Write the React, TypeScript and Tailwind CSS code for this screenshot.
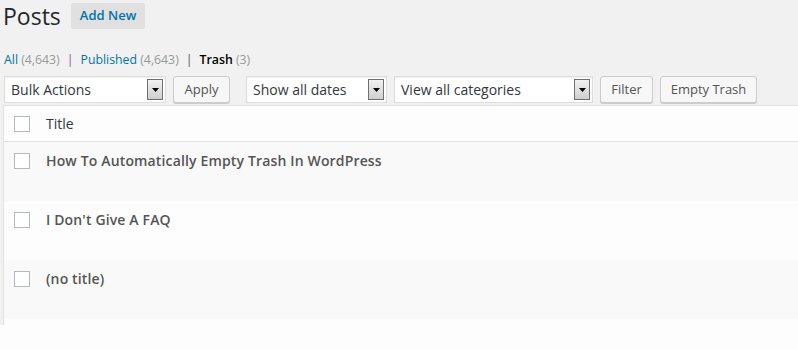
const font = { fontFamily: '"Open Sans", "Noto Sans", sans-serif' };

function SelectBox({ label, width }: { label: string; width: string }) {
  return (
    <div
      className={`flex h-[27px] ${width} items-center justify-between border border-[#dddddd] bg-white pl-[6px] pr-[2px] shadow-[inset_0_1px_2px_rgba(0,0,0,0.07)]`}
    >
      <span className="text-[14px] text-[#32373c]">{label}</span>
      <span className="flex h-[21px] w-[16px] items-center justify-center border border-[#707070] bg-gradient-to-b from-[#f2f2f2] to-[#cfcfcf]">
        <svg width="7" height="4" viewBox="0 0 7 4">
          <path d="M0 0h7L3.5 4z" fill="#000" />
        </svg>
      </span>
    </div>
  );
}

function Button({ label, width }: { label: string; width: string }) {
  return (
    <div
      className={`flex h-[27px] ${width} items-center justify-center rounded-[3px] border border-[#cccccc] bg-[#f7f7f7] text-[13px] text-[#555555] shadow-[0_1px_0_#cccccc]`}
    >
      {label}
    </div>
  );
}

function Checkbox() {
  return <div className="h-[16px] w-[16px] border border-[#b4b9be] bg-white" />;
}

export default function App() {
  const posts = [
    "How To Automatically Empty Trash In WordPress",
    "I Don't Give A FAQ",
    "(no title)",
  ];

  return (
    <div className="h-[350px] w-[798px] overflow-hidden bg-[#f1f1f1]" style={font}>
      <div className="flex items-center gap-[10px] pl-[3px] pt-[3px]">
        <h1 className="text-[23px] leading-[26px] text-[#23282d]">Posts</h1>
        <div className="flex h-[26px] items-center rounded-[2px] bg-[#e0e0e0] px-[9px] text-[13px] font-semibold text-[#0073aa]">
          Add New
        </div>
      </div>

      <div className="mt-[22px] flex items-center pl-[4px] text-[12.3px] leading-[18px]">
        <span className="text-[#0073aa]">
          All <span className="text-[#999999]">(4,643)</span>
        </span>
        <span className="px-[7px] text-[#8a5a8a]">|</span>
        <span className="text-[#0073aa]">
          Published <span className="text-[#999999]">(4,643)</span>
        </span>
        <span className="px-[7px] text-[#555555]">|</span>
        <span className="font-semibold text-black">
          Trash <span className="font-normal text-[#999999]">(3)</span>
        </span>
      </div>

      <div className="mt-[7px] flex items-center pl-[4px]">
        <SelectBox label="Bulk Actions" width="w-[162px]" />
        <div className="ml-[7px]">
          <Button label="Apply" width="w-[57px]" />
        </div>
        <div className="ml-[16px]">
          <SelectBox label="Show all dates" width="w-[141px]" />
        </div>
        <div className="ml-[7px]">
          <SelectBox label="View all categories" width="w-[199px]" />
        </div>
        <div className="ml-[7px]">
          <Button label="Filter" width="w-[53px]" />
        </div>
        <div className="ml-[7px]">
          <Button label="Empty Trash" width="w-[97px]" />
        </div>
      </div>

      <div className="ml-[3px] mt-[2px] border-l border-t border-[#e1e1e1] bg-[#fdfdfd] pb-[6px]">
        <div className="flex h-[36px] items-center border-b border-[#e1e1e1] bg-[#fdfdfd]">
          <div className="ml-[10px]">
            <Checkbox />
          </div>
          <span className="ml-[16px] text-[14px] text-[#32373c]">Title</span>
        </div>
        {posts.map((title, index) => (
          <div
            key={title}
            className={`flex h-[59px] items-start pt-[10px] ${index % 2 === 0 ? "bg-[#f9f9f9]" : "bg-[#fdfdfd]"}`}
          >
            <div className="ml-[10px] mt-[1px]">
              <Checkbox />
            </div>
            <span className="ml-[16px] text-[14px] font-semibold leading-[18px] tracking-[0.15px] text-[#555555]">
              {title}
            </span>
          </div>
        ))}
      </div>
      <div className="h-[40px] bg-[#fdfdfd]" />
    </div>
  );
}
